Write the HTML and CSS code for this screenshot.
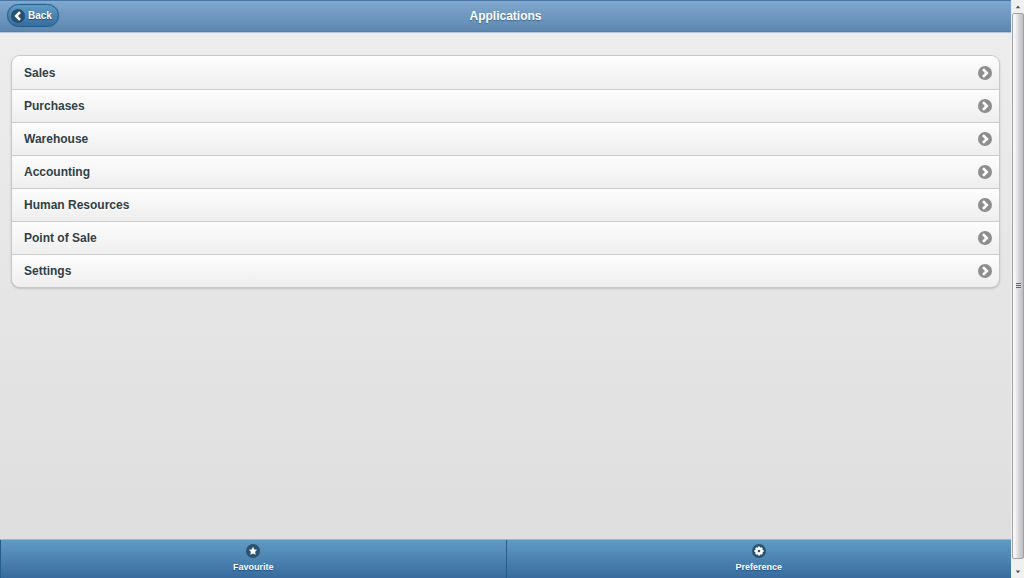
FILE: index.html
```html
<!DOCTYPE html>
<html lang="en">
<head>
<meta charset="utf-8">
<meta name="viewport" content="width=device-width, initial-scale=1">
<title>Applications</title>
<link rel="stylesheet" href="styles.css">
</head>
<body>
<svg class="defs" aria-hidden="true">
  <symbol id="chevron" viewBox="0 0 14 14">
    <circle cx="7" cy="7" r="7" fill="#8e8e8e"/>
    <path d="M5 3.2 8.8 7 5 10.8" fill="none" stroke="#fff" stroke-width="2.6"/>
  </symbol>
</svg>
<div class="window">
  <div class="page">
    <header class="header">
      <button class="back" type="button">
        <svg class="back-icon" viewBox="0 0 14 14" aria-hidden="true">
          <circle cx="7" cy="7" r="7" fill="#28506f"/>
          <path d="M9 3.2 5.2 7 9 10.8" fill="none" stroke="#fff" stroke-width="2.6"/>
        </svg>
        Back
      </button>
      <h1 class="title">Applications</h1>
    </header>
    <main class="content">
      <ul class="list">
        <li class="item"><a class="link" href="#sales">Sales<svg class="arrow" aria-hidden="true"><use href="#chevron"/></svg></a></li>
        <li class="item"><a class="link" href="#purchases">Purchases<svg class="arrow" aria-hidden="true"><use href="#chevron"/></svg></a></li>
        <li class="item"><a class="link" href="#warehouse">Warehouse<svg class="arrow" aria-hidden="true"><use href="#chevron"/></svg></a></li>
        <li class="item"><a class="link" href="#accounting">Accounting<svg class="arrow" aria-hidden="true"><use href="#chevron"/></svg></a></li>
        <li class="item"><a class="link" href="#hr">Human Resources<svg class="arrow" aria-hidden="true"><use href="#chevron"/></svg></a></li>
        <li class="item"><a class="link" href="#pos">Point of Sale<svg class="arrow" aria-hidden="true"><use href="#chevron"/></svg></a></li>
        <li class="item"><a class="link" href="#settings">Settings<svg class="arrow" aria-hidden="true"><use href="#chevron"/></svg></a></li>
      </ul>
    </main>
    <nav class="footer">
      <a class="tab" href="#favourite">
        <svg class="tab-icon" viewBox="0 0 14 14" aria-hidden="true">
          <circle cx="7" cy="7" r="7" fill="#2b526f"/>
          <path d="M7 2.7 8.3 5.4 11.2 5.7 9.1 7.8 9.6 10.8 7 9.4 4.4 10.8 4.9 7.8 2.8 5.7 5.7 5.4Z" fill="#fff"/>
        </svg>
        Favourite
      </a>
      <a class="tab" href="#preference">
        <svg class="tab-icon" viewBox="0 0 14 14" aria-hidden="true">
          <circle cx="7" cy="7" r="7" fill="#2b526f"/>
          <circle cx="7" cy="7" r="3.8" fill="#fff"/>
          <path d="M7 2.4V11.6M2.4 7H11.6M3.8 3.8 10.2 10.2M10.2 3.8 3.8 10.2" stroke="#fff" stroke-width="1.8"/>
          <circle cx="7" cy="7" r="1.3" fill="#2b526f"/>
        </svg>
        Preference
      </a>
    </nav>
  </div>
  <div class="scrollbar" aria-hidden="true">
    <svg class="scroll-arrow" viewBox="0 0 13 12"><path d="M4 8 6.5 5 9 8Z" fill="#555"/></svg>
    <div class="thumb"><span class="grip"></span></div>
    <svg class="scroll-arrow" viewBox="0 0 13 12"><path d="M4 5H9L6.5 8Z" fill="#555"/></svg>
  </div>
</div>
</body>
</html>
```
FILE: styles.css
```css
* { box-sizing: border-box; }

body {
  margin: 0;
  font-family: "Liberation Sans", Arial, sans-serif;
  font-weight: bold;
}

.defs {
  display: block;
  width: 0;
  height: 0;
}

.window {
  display: flex;
  height: 100vh;
}

.page {
  flex: 1;
  display: flex;
  flex-direction: column;
  background: linear-gradient(#eeeeee, #dddddd);
}

.header {
  display: grid;
  grid-template-columns: 1fr auto 1fr;
  align-items: center;
  height: 32px;
  padding: 0 7px 1px;
  border-top: 1px solid #4a77a8;
  border-bottom: 1px solid #5580aa;
  background: linear-gradient(#81a8ce, #5e87b0);
  box-shadow: 0 1px 0 #b4c5d6;
}

.back {
  justify-self: start;
  display: flex;
  align-items: center;
  gap: 3px;
  height: 23px;
  padding: 0 6px 0 3px;
  border: 1px solid #1f5f8b;
  border-radius: 12px;
  background: linear-gradient(#5f9cc5, #396b9e);
  box-shadow: 0 0 1px #39658f;
  color: #fff;
  font: bold 10px "Liberation Sans", Arial, sans-serif;
  text-shadow: 0 1px 1px #194b7e;
}

.back-icon,
.tab-icon {
  width: 14px;
  height: 14px;
}

.title {
  margin: 0;
  color: #fff;
  font-size: 12px;
  font-weight: bold;
  line-height: 16px;
  text-shadow: 0 1px 1px #3e6790;
}

.content {
  flex: 1;
  padding: 24px 12px;
}

.list {
  margin: 0;
  padding: 0;
  overflow: hidden;
  list-style: none;
  border-radius: 8px;
  box-shadow: 0 0 0 1px #c8c8c8, 0 1px 3px #00000055;
}

.item { border-top: 1px solid #cccccc; }

.item:first-child { border-top-color: #fdfdfd; }

.link {
  display: flex;
  align-items: center;
  justify-content: space-between;
  height: 32px;
  padding: 0 7px 0 12px;
  background: linear-gradient(#fdfdfd, #eeeeee);
  color: #2f3e46;
  font-size: 12px;
  text-decoration: none;
  text-shadow: 0 1px 0 #fff;
}

.arrow {
  width: 14px;
  height: 14px;
}

.footer {
  display: grid;
  grid-template-columns: 1fr 1fr;
  border-top: 1px solid #a5b5c1;
}

.tab {
  display: flex;
  flex-direction: column;
  align-items: center;
  gap: 4px;
  height: 38px;
  padding-top: 4px;
  border-left: 1px solid #225f8c;
  background: linear-gradient(#5f9cc5, #396b9e);
  color: #fff;
  font-size: 9px;
  line-height: 10px;
  text-decoration: none;
  text-shadow: 0 1px 1px #194b7e;
}

.scrollbar {
  display: flex;
  flex-direction: column;
  width: 13px;
  padding-left: 1px;
  background: #f0f0f0;
}

.scroll-arrow {
  height: 13px;
}

.thumb {
  flex: 1;
  display: grid;
  place-items: center;
  margin-bottom: 6px;
  border: 1px solid #a2a2a6;
  border-radius: 2px;
  background: linear-gradient(90deg, #f6f6f6 20%, #d8d8dc 55%, #bdbdc3);
}

.grip {
  width: 5px;
  height: 6px;
  background: repeating-linear-gradient(#666 0 1px, #ddd 1px 2px);
}
```
